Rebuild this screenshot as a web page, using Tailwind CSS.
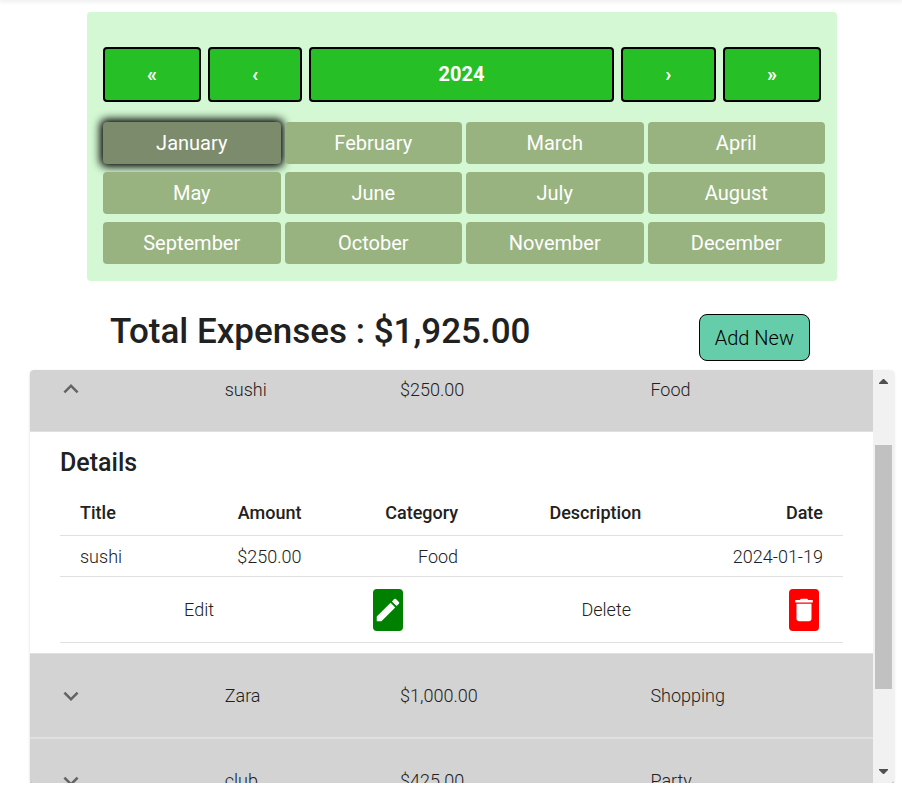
<!DOCTYPE html>
<html lang="en">
<head>
<meta charset="utf-8">
<meta name="viewport" content="width=device-width, initial-scale=1">
<title>Expenses</title>
<script src="https://cdn.jsdelivr.net/npm/@tailwindcss/browser@4"></script>
</head>
<body class="bg-white font-[Roboto,sans-serif] text-[#212121]">
<header class="h-0 shadow-[0_0_4px_1px_rgba(0,0,0,0.15)]"></header>
<main class="pt-3 pr-2 pl-[30px]">
  <section aria-label="Month picker" class="mx-auto w-7/8 max-w-[750px] rounded bg-[#d3f8d3] pt-[35px] pr-3 pb-[17px] pl-4 text-white">
    <div class="mr-1 grid h-[55px] grid-cols-[98fr_94fr_304fr_95fr_98fr] gap-[7px] font-bold">
      <button type="button" aria-label="Previous decade" class="rounded border-2 border-black bg-[#26bf26] pb-[2px] text-xl">«</button>
      <button type="button" aria-label="Previous year" class="rounded border-2 border-black bg-[#26bf26] pb-[2px] text-xl">‹</button>
      <button type="button" class="rounded border-2 border-black bg-[#26bf26] pb-[2px] text-xl">2024</button>
      <button type="button" aria-label="Next year" class="rounded border-2 border-black bg-[#26bf26] pb-[2px] text-xl">›</button>
      <button type="button" aria-label="Next decade" class="rounded border-2 border-black bg-[#26bf26] pb-[2px] text-xl">»</button>
    </div>
    <div class="mt-5 grid auto-rows-[42px] grid-cols-4 gap-x-1 gap-y-2 text-xl">
      <button type="button" aria-pressed="true" class="rounded bg-[#7d8b6d] shadow-[0_0_8px_3px_rgba(0,0,0,1)]">January</button>
      <button type="button" class="z-1 rounded bg-[#98b380]">February</button>
      <button type="button" class="rounded bg-[#98b380]">March</button>
      <button type="button" class="rounded bg-[#98b380]">April</button>
      <button type="button" class="rounded bg-[#98b380]">May</button>
      <button type="button" class="rounded bg-[#98b380]">June</button>
      <button type="button" class="rounded bg-[#98b380]">July</button>
      <button type="button" class="rounded bg-[#98b380]">August</button>
      <button type="button" class="rounded bg-[#98b380]">September</button>
      <button type="button" class="rounded bg-[#98b380]">October</button>
      <button type="button" class="rounded bg-[#98b380]">November</button>
      <button type="button" class="rounded bg-[#98b380]">December</button>
    </div>
  </section>

  <div class="mt-[33px] flex items-start justify-between pr-[84px] pl-20">
    <h1 class="text-[35px] leading-9 font-medium">Total Expenses : $1,925.00</h1>
    <button type="button" class="h-[47px] rounded-lg border border-black bg-[#66cdaa] px-[15px] text-xl font-light text-black">Add New</button>
  </div>

  <section aria-label="Expenses" class="mt-[9px] flex h-[413px] overflow-hidden rounded shadow-[0_1px_0_rgba(0,0,0,0.25),0_1px_1px_rgba(0,0,0,0.14),0_1px_3px_rgba(0,0,0,0.12)]">
    <div class="min-w-0 grow overflow-hidden">
      <table class="-mt-[22px] w-full table-fixed text-lg font-light">
        <colgroup>
          <col class="w-[23.1%]"><col class="w-[20.8%]"><col class="w-[29.7%]"><col>
        </colgroup>
        <tbody>
          <tr class="h-[83px] border-b border-[#e0e0e0] bg-[#d3d3d3]">
            <td class="pl-[26px]"><button type="button" aria-label="Collapse sushi" class="block"><svg class="size-[30px] fill-[#636363]" viewBox="0 0 24 24"><path d="M7.41 15.41 12 10.83l4.59 4.58L18 14l-6-6-6 6z"/></svg></button></td>
            <td class="pt-[2px]">sushi</td><td class="pt-[2px]">$250.00</td><td class="pt-[2px]">Food</td>
          </tr>
          <tr>
            <td colspan="4" class="px-[30px] pb-[10px]">
              <h2 class="pt-[15px] text-[25px] leading-8 font-medium">Details</h2>
              <table class="mt-3 w-full table-fixed text-right">
                <colgroup>
                  <col class="w-[17%]"><col class="w-[16.4%]"><col class="w-[20%]"><col class="w-[23.4%]"><col>
                </colgroup>
                <thead>
                  <tr class="h-[45px] border-b border-[#e0e0e0] font-medium">
                    <th class="pl-5 text-left font-medium">Title</th>
                    <th class="pr-5 font-medium">Amount</th>
                    <th class="pr-5 font-medium">Category</th>
                    <th class="pr-5 font-medium">Description</th>
                    <th class="pr-5 font-medium">Date</th>
                  </tr>
                </thead>
                <tbody>
                  <tr class="h-[41px] border-b border-[#e0e0e0]">
                    <td class="pt-[2px] pl-5 text-left">sushi</td>
                    <td class="pt-[2px] pr-5">$250.00</td>
                    <td class="pt-[2px] pr-5">Food</td>
                    <td class="pt-[2px] pr-5"></td>
                    <td class="pt-[2px] pr-5">2024-01-19</td>
                  </tr>
                  <tr class="h-[66px] border-b border-[#e0e0e0]">
                    <td colspan="5">
                      <div class="grid grid-cols-[154fr_189fr_228fr_188fr] items-center pr-6">
                        <span>Edit</span>
                        <button type="button" aria-label="Edit" class="flex h-[42px] w-[30px] items-center justify-center justify-self-end rounded bg-[#008000]"><svg class="size-[30px] fill-white" viewBox="0 0 24 24"><path d="M3 17.25V21h3.75L17.81 9.94l-3.75-3.75zM20.71 7.04c.39-.39.39-1.02 0-1.41l-2.34-2.34a.9959.9959 0 0 0-1.41 0l-1.83 1.83 3.75 3.75z"/></svg></button>
                        <span>Delete</span>
                        <button type="button" aria-label="Delete" class="flex h-[42px] w-[30px] items-center justify-center justify-self-end rounded bg-[#ff0000]"><svg class="size-[30px] fill-white" viewBox="0 0 24 24"><path d="M6 19c0 1.100.9 2 2 2h8c1.100 0 2-.9 2-2V7H6zM19 4h-3.500l-1-1h-5l-1 1H5v2h14z"/></svg></button>
                      </div>
                    </td>
                  </tr>
                </tbody>
              </table>
            </td>
          </tr>
          <tr class="h-[84px] border-t border-b-2 border-[#e0e0e0] bg-[#d3d3d3]">
            <td class="pt-[2px] pl-[26px]"><button type="button" aria-label="Expand Zara" class="block"><svg class="size-[30px] fill-[#636363]" viewBox="0 0 24 24"><path d="M7.41 8.590 12 13.170l4.590-4.580L18 10l-6 6-6-6z"/></svg></button></td>
            <td class="pt-[2px]">Zara</td><td class="pt-[2px]">$1,000.00</td><td class="pt-[2px]">Shopping</td>
          </tr>
          <tr class="h-[84px] bg-[#d3d3d3]">
            <td class="pt-[2px] pl-[26px]"><button type="button" aria-label="Expand club" class="block"><svg class="size-[30px] fill-[#636363]" viewBox="0 0 24 24"><path d="M7.41 8.590 12 13.170l4.590-4.580L18 10l-6 6-6-6z"/></svg></button></td>
            <td class="pt-[2px]">club</td><td class="pt-[2px]">$425.00</td><td class="pt-[2px]">Party</td>
          </tr>
        </tbody>
      </table>
    </div>
    <!-- Scroll bar -->
    <div class="flex w-[21px] shrink-0 flex-col items-center bg-[#f1f1f1] pt-[9px] pb-[9px]" aria-hidden="true">
      <svg class="h-[5px] w-[9px] fill-[#505050]" viewBox="0 0 9 5"><path d="M4 0h1l4 4v1H0V4z"/></svg>
      <div class="grow-61 basis-0"></div>
      <div class="w-[17px] grow-243 basis-0 bg-[#c1c1c1]"></div>
      <div class="grow-80 basis-0"></div>
      <svg class="h-[5px] w-[9px] fill-[#505050]" viewBox="0 0 9 5"><path d="M4 5h1l4-4V0H0v1z"/></svg>
    </div>
  </section>
</main>
</body>
</html>
